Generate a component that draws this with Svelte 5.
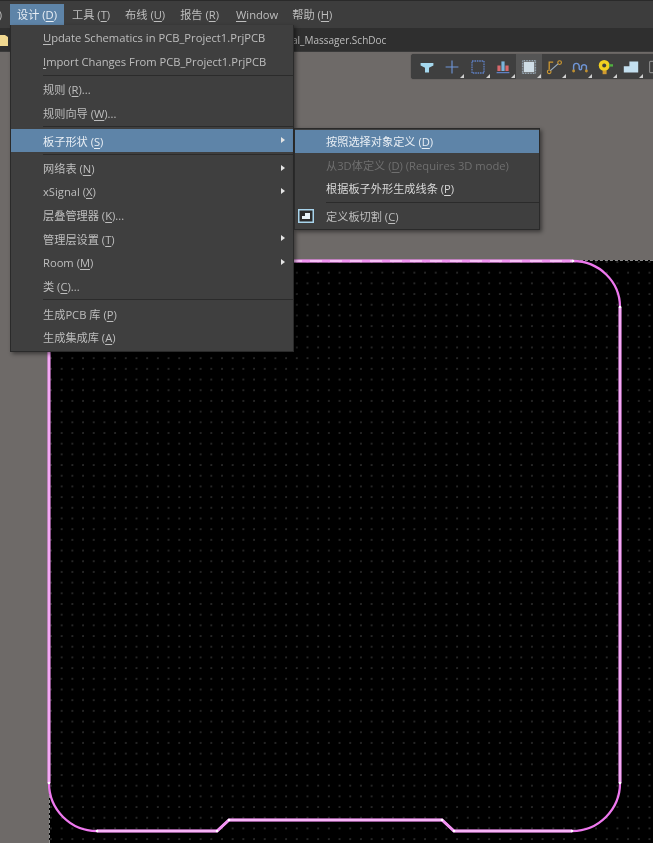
<script>
// accelerator key is split out so it can be underlined
const topMenu = [
    { pre: '设计 (', key: 'D', post: ')', open: true },
    { pre: '工具 (', key: 'T', post: ')' },
    { pre: '布线 (', key: 'U', post: ')' },
    { pre: '报告 (', key: 'R', post: ')' },
    { pre: '', key: 'W', post: 'indow' },
    { pre: '帮助 (', key: 'H', post: ')' }
]

const designMenu = [
    { pre: '', key: 'U', post: 'pdate Schematics in PCB_Project1.PrjPCB' },
    { pre: '', key: 'I', post: 'mport Changes From PCB_Project1.PrjPCB' },
    { sep: true },
    { pre: '规则 (', key: 'R', post: ')...' },
    { pre: '规则向导 (', key: 'W', post: ')...' },
    { sep: true },
    { pre: '板子形状 (', key: 'S', post: ')', sub: true, active: true },
    { sep: true },
    { pre: '网络表 (', key: 'N', post: ')', sub: true },
    { pre: 'xSignal (', key: 'X', post: ')', sub: true },
    { pre: '层叠管理器 (', key: 'K', post: ')...' },
    { pre: '管理层设置 (', key: 'T', post: ')', sub: true },
    { pre: 'Room (', key: 'M', post: ')', sub: true },
    { pre: '类 (', key: 'C', post: ')...' },
    { sep: true },
    { pre: '生成PCB 库 (', key: 'P', post: ')' },
    { pre: '生成集成库 (', key: 'A', post: ')' }
]

const shapeMenu = [
    { pre: '按照选择对象定义 (', key: 'D', post: ')', active: true },
    { pre: '从3D体定义 (', key: 'D', post: ') (Requires 3D mode)', disabled: true },
    { pre: '根据板子外形生成线条 (', key: 'P', post: ')', bright: true },
    { sep: true },
    { pre: '定义板切割 (', key: 'C', post: ')', icon: true }
]

const tools = ['filter', 'cross', 'select', 'bars', 'chip', 'route', 'wave', 'pad', 'step', 'more']

const board = 'M573 261 A47 46 0 0 1 620 307 L620 783 A48 48 0 0 1 572 831 L454 831 L442 820 L229 820 L217 831 L97 831 A48 48 0 0 1 49 783 L49 261 Z'
const straights = 'M290 261H573M620 307V783M572 831H454L442 820H229L217 831H97M49 783V261'
const nodes = [[573, 261], [620, 307], [620, 783], [572, 831], [454, 831], [442, 820], [229, 820], [217, 831], [97, 831], [49, 783]]
</script>

<div class="screen">
    <div class="menubar">
        <span class="cut">)</span>
        {#each topMenu as m}
            <span class="top-item" class:open={m.open}>{m.pre}<u>{m.key}</u>{m.post}</span>
        {/each}
    </div>

    <div class="tabbar">
        <svg class="folder" width="9" height="12" viewBox="0 0 9 12">
            <path d="M0 1h6l3 2v9H0z" fill="#f0d890" />
        </svg>
        <span class="tab-name">al_Massager.SchDoc</span>
    </div>

    <div class="workspace">
        <div class="canvas">
            <svg class="outline" viewBox="49 261 604 582" width="604" height="582">
                <path d={board} fill="none" stroke="#ee78ee" stroke-width="2.3" />
                <path d={straights} fill="none" stroke="#f294f2" stroke-width="3" />
                <path d="M97 831H217M229 820H442M454 831H572" fill="none" stroke="#fbe4fb" stroke-width="0.8" />
                <path d="M290 261H573" fill="none" stroke="#fad0fa" stroke-width="1.4" stroke-dasharray="12 8" />
                <path d="M620 307V783M49 340V783" fill="none" stroke="#f8c0f8" stroke-width="1" />
                {#each nodes as [x, y]}
                    <circle cx={x} cy={y} r="1.300" fill="#fff" />
                {/each}
            </svg>
        </div>

        <div class="toolbar">
            {#each tools as t}
                <div class="tool" class:on={t === 'chip'}>
                    <svg width="16" height="16" viewBox="0 0 20 20">
                        {#if t === 'filter'}
                            <path d="M2 5h16v3l-5.500 3v6h-5v-6l-5.500-3z" fill="#a5d8ee" />
                        {:else if t === 'cross'}
                            <path d="M10 2v16M2 10h16" stroke="#6f96d8" stroke-width="1.400" fill="none" />
                        {:else if t === 'select'}
                            <rect x="2.500" y="2.500" width="15" height="15" fill="none" stroke="#5f80c4" stroke-width="1.600" stroke-dasharray="2 1" />
                        {:else if t === 'bars'}
                            <path d="M3 8h4v7H3zM13 8h4v7h-4z" fill="#d8686c" />
                            <path d="M8 3h4v12H8z" fill="#7ab4dc" />
                            <path d="M2 17h16" stroke="#5f80c4" stroke-width="1.600" />
                        {:else if t === 'chip'}
                            <rect x="2" y="2" width="16" height="16" fill="none" stroke="#a8bccb" stroke-width="1.800" stroke-dasharray="1 1" />
                            <rect x="3.500" y="3.500" width="13" height="13" fill="#cfdde6" />
                        {:else if t === 'route'}
                            <circle cx="4" cy="16" r="2.300" fill="none" stroke="#d09a30" stroke-width="1.400" />
                            <circle cx="17" cy="4.500" r="2.300" fill="none" stroke="#d09a30" stroke-width="1.400" />
                            <path d="M5.500 14.500 15 6" stroke="#9fb4c8" stroke-width="1.400" fill="none" />
                            <path d="M4 13V4h5" stroke="#d09a30" stroke-width="1.600" fill="none" />
                        {:else if t === 'wave'}
                            <path d="M2 14V9a3.500 3.500 0 0 1 7 0v3a1.500 1.500 0 0 0 3 0V9a3.500 3.500 0 0 1 6 0v5" stroke="#6f96d8" stroke-width="1.800" fill="none" />
                            <circle cx="2" cy="15" r="1.800" fill="#c09030" />
                            <circle cx="18" cy="15" r="1.800" fill="#c09030" />
                        {:else if t === 'pad'}
                            <path d="M7 14h5v5H7z" fill="#d09a30" />
                            <circle cx="9" cy="8" r="6.800" fill="#f2d020" />
                            <circle cx="9" cy="8" r="2.500" fill="#3f3f3f" />
                            <path d="M15 6.500h5v3h-5z" fill="#50b040" />
                        {:else if t === 'step'}
                            <path d="M1 9h7V3h11v14H1z" fill="#c4e0f0" />
                        {:else}
                            <rect x="2" y="3" width="16" height="14" rx="1" fill="none" stroke="#888" stroke-width="1.400" />
                        {/if}
                    </svg>
                    {#if t !== 'more' && t !== 'filter'}<i class="corner"></i>{/if}
                </div>
            {/each}
        </div>
    </div>

    <div class="menu design">
        {#each designMenu as item}
            {#if item.sep}
                <div class="sep"></div>
            {:else}
                <div class="row" class:active={item.active}>
                    <span>{item.pre}<u>{item.key}</u>{item.post}</span>
                    {#if item.sub}<i class="arrow"></i>{/if}
                </div>
            {/if}
        {/each}
    </div>

    <div class="menu shape">
        {#each shapeMenu as item}
            {#if item.sep}
                <div class="sep"></div>
            {:else}
                <div class="row" class:active={item.active} class:disabled={item.disabled} class:bright={item.bright}>
                    {#if item.icon}
                        <svg class="cut-icon" width="16" height="14" viewBox="0 0 16 14">
                            <rect x="0.750" y="0.750" width="14.500" height="12.500" fill="#2c2c2c" stroke="#a8d4ec" stroke-width="1.500" />
                            <path d="M4 10V7h3V4h5v6z" fill="#e8f2f8" />
                        </svg>
                    {/if}
                    <span>{item.pre}<u>{item.key}</u>{item.post}</span>
                </div>
            {/if}
        {/each}
    </div>
</div>

<style>
:global(body) {
    margin: 0;
    background: #6e6a68;
}

.screen {
    position: relative;
    width: 653px;
    height: 843px;
    overflow: hidden;
    display: flex;
    flex-direction: column;
    font-family: "Open Sans", "Noto Sans CJK SC", sans-serif;
    font-size: 11.2px;
    color: #bebebe;
    filter: blur(0.45px);
}

u {
    text-underline-offset: 2px;
    text-decoration-thickness: 1px;
}

.menubar {
    height: 25px;
    flex: none;
    box-sizing: border-box;
    padding-top: 3px;
    display: flex;
    background: #3d3d3d;
    border-top: 1px solid #2a2a2a;
}

.cut {
    width: 10px;
    margin-left: -8px;
    margin-right: 8px;
    line-height: 21px;
    text-align: right;
}

.top-item {
    padding: 0 7px;
    margin-right: 1px;
    line-height: 21px;
    white-space: nowrap;
}

.top-item:nth-child(5) {
    margin-right: 3px;
}

.top-item:nth-child(6) {
    margin-right: 0;
}

.top-item.open {
    background: #5e84a8;
    color: #e8eef4;
}

.tabbar {
    height: 27px;
    flex: none;
    display: flex;
    align-items: center;
    box-sizing: border-box;
    background: #2f2f2f;
    border-top: 3px solid #3d3d3d;
    border-bottom: 1px solid #3a3a3a;
}

.folder {
    margin-left: -1px;
}

.tab-name {
    margin-left: 284px;
    font-size: 10px;
}

.workspace {
    position: relative;
    flex: 1;
    min-height: 0;
    background: #6e6a68;
    display: flex;
    flex-direction: column;
}

.canvas {
    position: relative;
    flex: 1;
    margin: 208px 0 0 49px;
    background-color: #000;
    background-image: radial-gradient(circle at 1px 1px, #262626 0.7px, transparent 1px);
    background-size: 10.7px 10.7px;
    border-top: 1px dashed #8c8c8c;
    border-left: 1px dashed #8c8c8c;
}

.outline {
    position: absolute;
    left: -1px;
    top: 0;
    overflow: visible;
}

.toolbar {
    position: absolute;
    left: 411px;
    top: 2px;
    height: 25px;
    width: 262px;
    padding-left: 3px;
    box-sizing: border-box;
    display: flex;
    background: #3f3f3f;
    border-radius: 3px;
    box-shadow: 0 0 1px #2c2c2c;
}

.tool {
    position: relative;
    width: 25.5px;
    flex: none;
    display: flex;
    align-items: center;
    justify-content: center;
}

.tool.on {
    background: #555;
}

.corner {
    position: absolute;
    right: 1px;
    bottom: 1px;
    width: 0;
    height: 0;
    border-left: 4px solid transparent;
    border-bottom: 4px solid #d0d0d0;
}

.menu {
    position: absolute;
    box-sizing: border-box;
    background: #3f3f3f;
    border: 1px solid #2a2a2a;
    box-shadow: 2px 2px 4px rgba(0, 0, 0, 0.45);
}

.design {
    left: 10px;
    top: 25px;
    width: 284px;
    height: 327px;
    border-top: 0;
    padding-top: 1.2px;
}

.shape {
    left: 294px;
    top: 128px;
    width: 246px;
    height: 102px;
    padding-top: 0.5px;
}

.row {
    position: relative;
    height: 23.5px;
    display: flex;
    align-items: center;
    box-sizing: border-box;
    white-space: nowrap;
}

.design .row {
    padding-left: 32px;
}

.shape .row {
    padding-left: 31px;
}

.row.active {
    background: #5e84a8;
    color: #e8eef4;
}

.row.disabled {
    color: #6f6f6f;
}

.row.bright {
    color: #d8d8d8;
}

.sep {
    height: 4.3px;
    box-sizing: border-box;
    padding-top: 1.6px;
    position: relative;
}

.sep::after {
    content: "";
    display: block;
    height: 1px;
    background: #2b2b2b;
}

.design .sep {
    margin-left: 32px;
}

.shape .sep {
    margin-left: 31px;
}

.arrow {
    position: absolute;
    right: 8px;
    top: 8px;
    width: 0;
    height: 0;
    border-left: 4px solid #e4e4e4;
    border-top: 3.5px solid transparent;
    border-bottom: 3.5px solid transparent;
}

.cut-icon {
    position: absolute;
    left: 3px;
    top: 5px;
}
</style>
